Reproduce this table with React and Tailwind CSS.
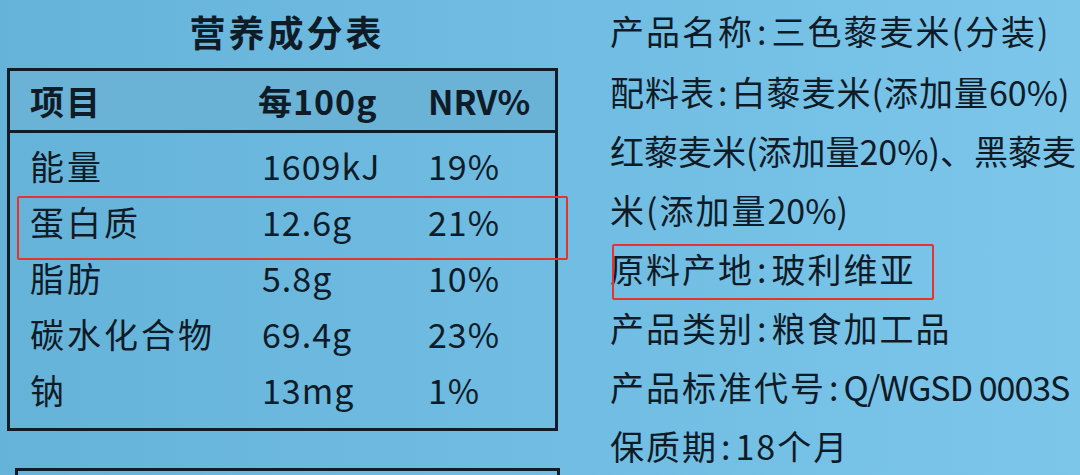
const rows = [
  { name: '能量', value: '1609kJ', nrv: '19%' },
  { name: '蛋白质', value: '12.6g', nrv: '21%' },
  { name: '脂肪', value: '5.8g', nrv: '10%' },
  { name: '碳水化合物', value: '69.4g', nrv: '23%' },
  { name: '钠', value: '13mg', nrv: '1%' },
]

export default function App() {
  return (
    <div
      className="relative w-[1080px] h-[475px] overflow-hidden bg-gradient-to-r from-[#66b3d9] via-[#70bce2] to-[#7cc6ea] text-[#0f1b27]"
      style={{ fontFamily: '"Noto Sans CJK SC", "Noto Sans", sans-serif' }}
    >
      <div className="flex">
        {/* 营养成分表 */}
        <div className="w-[600px] shrink-0 flex flex-col">
          <h1 className="h-[68px] pt-[6px] pr-[26px] text-center text-[36px] font-bold tracking-[3px] leading-[50px]">营养成分表</h1>

          <div className="ml-[7px] w-[551px] h-[363px] border-[3px] border-[#0f1d2a]">
            <div className="h-[62px] border-b-[3px] border-[#0f1d2a] bg-[#6ab3d7] pl-[20px] grid grid-cols-[228px_170px_1fr] items-center text-[34px] font-bold">
              <span className="tracking-[2px]">项目</span>
              <span className="tracking-[1px]">每100g</span>
              <span>NRV%</span>
            </div>
            <div className="pt-[5px] pl-[20px]">
              {rows.map((r) => (
                <div key={r.name} className="h-[56px] grid grid-cols-[232px_166px_1fr] items-center text-[34px] leading-none">
                  <span className="tracking-[3px]">{r.name}</span>
                  <span className="tracking-[1px]">{r.value}</span>
                  <span className="tracking-[1px]">{r.nrv}</span>
                </div>
              ))}
            </div>
          </div>

          <div className="mt-[37px] ml-[15px] w-[545px] h-[20px] border-t-[3px] border-x-[3px] border-[#0f1d2a]"></div>
        </div>

        {/* 产品信息 */}
        <div className="pl-[10px] flex flex-col text-[34px] tracking-[2px] whitespace-nowrap">
          <p className="h-[62px] leading-[62px]">产品名称<span className="mx-[3px]">:</span>三色藜麦米(分装)</p>
          <p className="h-[59px] leading-[59px] tracking-[1px]">配料表<span className="mx-[3px]">:</span>白藜麦米(添加量<span className="tracking-normal">60%)</span></p>
          <p className="h-[59px] leading-[59px] tracking-normal">红藜麦米(添加量20%)、黑藜麦</p>
          <p className="h-[59px] leading-[59px]">米(添加量<span className="tracking-normal">20%)</span></p>
          <p className="h-[59px] leading-[59px]">原料产地<span className="mx-[3px]">:</span>玻利维亚</p>
          <p className="h-[59px] leading-[59px]">产品类别<span className="mx-[3px]">:</span>粮食加工品</p>
          <p className="h-[59px] leading-[59px]">产品标准代号<span className="mx-[3px]">:</span><span className="tracking-[-1px]">Q/WGSD 0003S</span></p>
          <p className="h-[59px] leading-[59px]">保质期<span className="mx-[3px]">:</span>18个月</p>
        </div>
      </div>

      {/* 红框 */}
      <div className="absolute left-[17px] top-[196px] w-[551px] h-[64px] border-2 border-[#e8322c] rounded-[2px]"></div>
      <div className="absolute left-[612px] top-[244px] w-[322px] h-[56px] border-2 border-[#e8322c] rounded-[2px]"></div>
    </div>
  )
}
